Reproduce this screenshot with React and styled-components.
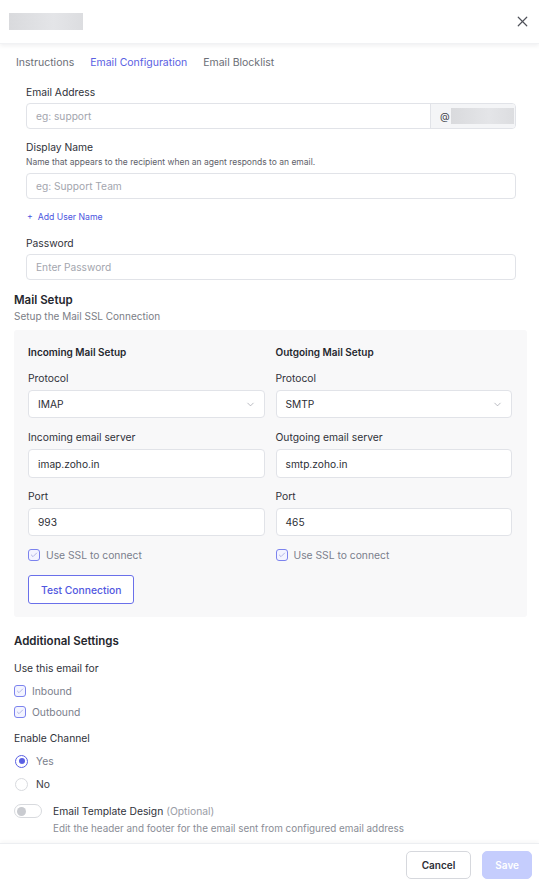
import React from 'react';
import styled, { createGlobalStyle } from 'styled-components';
import { X, ChevronDown, Check } from 'lucide-react';

const GlobalStyle = createGlobalStyle`
  * { box-sizing: border-box; }
  body {
    margin: 0;
    font-family: Inter, "Noto Sans", sans-serif;
    color: #2c2e35;
    background: #fff;
  }
`;

const Page = styled.div`
  width: 539px;
  height: 882px;
  display: flex;
  flex-direction: column;
  background: #fff;
`;

const Header = styled.header`
  height: 44px;
  flex: none;
  display: flex;
  align-items: center;
  justify-content: space-between;
  padding: 0 8px 0 9px;
  box-shadow: 0 2px 4px rgba(20, 24, 40, 0.06);
  border-bottom: 1px solid #f1f2f4;
`;

const Redacted = styled.span`
  display: inline-block;
  width: ${p => p.w || 74}px;
  height: ${p => p.h || 17}px;
  background: linear-gradient(90deg, #d9dadd, #e4e5e8 60%, #dcdde0);
`;

const Close = styled.button`
  border: 0;
  background: none;
  padding: 0;
  display: flex;
  color: #4f525a;
`;

const Body = styled.main`
  flex: 1;
  overflow: hidden;
`;

const Tabs = styled.nav`
  display: flex;
  gap: 16px;
  height: 36px;
  align-items: center;
  padding-left: 16px;
`;

const Tab = styled.span`
  font-size: 10.5px;
  color: ${p => (p.active ? '#5a60e3' : '#6b6e76')};
`;

const Fields = styled.section`
  padding: 5px 23px 0 26px;
`;

const Label = styled.div`
  font-size: 10.3px;
  line-height: 14px;
  color: #30323a;
  margin-top: ${p => p.mt || 0}px;
`;

const Help = styled.div`
  font-size: 8.5px;
  line-height: 12px;
  color: #5e616a;
  margin-top: 2px;
`;

const InputBox = styled.div`
  display: flex;
  height: ${p => p.h || 26}px;
  margin-top: ${p => p.mt || 4}px;
  border: 1px solid #e1e3e8;
  border-radius: 4px;
  background: #fff;
  overflow: hidden;
`;

const Field = styled.div`
  flex: 1;
  display: flex;
  align-items: center;
  justify-content: space-between;
  padding: 0 8px 0 9px;
  font-size: 10.2px;
  color: ${p => (p.filled ? '#2c2e35' : '#a3a6ae')};
`;

const Addon = styled.div`
  width: 85px;
  display: flex;
  align-items: center;
  gap: 1px;
  padding-left: 9px;
  background: #f4f5f7;
  border-left: 1px solid #e1e3e8;
  font-size: 10px;
  color: #40434b;
`;

const AddLink = styled.div`
  font-size: 8.7px;
  line-height: 12px;
  color: #4a55e0;
  margin-top: 12px;
  padding-left: 1px;
`;

const Section = styled.section`
  padding: 0 12px 0 14px;
`;

const SectionTitle = styled.h3`
  margin: ${p => p.mt || 0}px 0 0;
  font-size: 11.5px;
  line-height: 16px;
  font-weight: 600;
  color: #25272e;
`;

const SectionSub = styled.div`
  font-size: 10px;
  line-height: 14px;
  color: #7b7e86;
  margin-top: 1px;
`;

const Panel = styled.div`
  margin-top: 7px;
  background: #f8f8f9;
  border-radius: 3px;
  padding: 15px 15px 13px 14px;
`;

const Columns = styled.div`
  display: grid;
  grid-template-columns: 1fr 1fr;
  column-gap: 11px;
`;

const ColTitle = styled.div`
  font-size: 10px;
  line-height: 14px;
  font-weight: 600;
  color: #25272e;
`;

const CheckRow = styled.label`
  display: flex;
  align-items: center;
  gap: 6px;
  height: 14px;
  margin-top: ${p => p.mt || 0}px;
  font-size: 10.3px;
  color: #7a7e8c;
`;

const Box = styled.span`
  width: 12px;
  height: 12px;
  border: 1px solid #7c83ee;
  border-radius: 3px;
  background: #f3f4ff;
  display: flex;
  align-items: center;
  justify-content: center;
  color: #9297d8;
`;

const OutlineButton = styled.button`
  margin-top: 13px;
  height: 29px;
  padding: 0 12px;
  border: 1px solid #6a70ea;
  border-radius: 3px;
  background: #fff;
  color: #5158e0;
  font-family: inherit;
  font-size: 10.3px;
  font-weight: 500;
`;

const RadioRow = styled.label`
  display: flex;
  align-items: center;
  gap: 8px;
  height: 14px;
  margin-top: 9px;
  padding-left: 1px;
  font-size: 10.3px;
  color: ${p => (p.checked ? '#7a7e8c' : '#3a3c44')};
`;

const Radio = styled.span`
  width: 13px;
  height: 13px;
  border-radius: 50%;
  border: 1px solid ${p => (p.checked ? '#5a60e3' : '#d8dade')};
  display: flex;
  align-items: center;
  justify-content: center;
  &::after {
    content: '';
    width: 6px;
    height: 6px;
    border-radius: 50%;
    background: ${p => (p.checked ? '#5a60e3' : 'transparent')};
  }
`;

const ToggleRow = styled.div`
  display: flex;
  gap: 11px;
  margin-top: 13px;
`;

const Switch = styled.span`
  flex: none;
  width: 28px;
  height: 14px;
  border: 1px solid #d8dade;
  border-radius: 7px;
  background: #fff;
  display: flex;
  align-items: center;
  padding-left: 2px;
  &::before {
    content: '';
    width: 9px;
    height: 9px;
    border-radius: 50%;
    background: #c9cbd0;
  }
`;

const ToggleTitle = styled.div`
  font-size: 10.3px;
  line-height: 14px;
  color: #30323a;
  span { color: #9a9da6; }
`;

const ToggleSub = styled.div`
  font-size: 9.9px;
  line-height: 14px;
  color: #8a8d96;
  margin-top: 3px;
`;

const Footer = styled.footer`
  flex: none;
  height: 39px;
  border-top: 1px solid #eceef1;
  box-shadow: 0 -2px 4px rgba(20, 24, 40, 0.03);
  display: flex;
  justify-content: flex-end;
  align-items: flex-start;
  gap: 11px;
  padding: 7px 7px 0 0;
`;

const FootButton = styled.button`
  height: 28px;
  padding: 0 ${p => (p.primary ? 12 : 15)}px;
  border-radius: 5px;
  border: 1px solid ${p => (p.primary ? '#c5cdfd' : '#d6d8dd')};
  background: ${p => (p.primary ? '#c5cdfd' : '#fff')};
  color: ${p => (p.primary ? '#fff' : '#2c2e35')};
  font-family: inherit;
  font-size: 10px;
  font-weight: 600;
`;

const Checkbox = ({ children, mt }) => (
  <CheckRow mt={mt}>
    <Box>
      <Check size={8} strokeWidth={2} />
    </Box>
    {children}
  </CheckRow>
);

const Select = ({ value }) => (
  <InputBox h={28} mt={5}>
    <Field filled>
      {value}
      <ChevronDown size={11} color="#9a9da6" strokeWidth={1.5} />
    </Field>
  </InputBox>
);

const ServerColumn = ({ title, protocol, serverLabel, server, port }) => (
  <div>
    <ColTitle>{title}</ColTitle>
    <Label mt={12}>Protocol</Label>
    <Select value={protocol} />
    <Label mt={12}>{serverLabel}</Label>
    <InputBox h={29} mt={5}>
      <Field filled>{server}</Field>
    </InputBox>
    <Label mt={11}>Port</Label>
    <InputBox h={28} mt={5}>
      <Field filled>{port}</Field>
    </InputBox>
    <Checkbox mt={12}>Use SSL to connect</Checkbox>
  </div>
);

export default function App() {
  return (
    <Page>
      <GlobalStyle />
      <Header>
        <Redacted />
        <Close aria-label="Close">
          <X size={17} strokeWidth={1.7} />
        </Close>
      </Header>
      <Body>
        <Tabs>
          <Tab>Instructions</Tab>
          <Tab active>Email Configuration</Tab>
          <Tab>Email Blocklist</Tab>
        </Tabs>

        <Fields>
          <Label>Email Address</Label>
          <InputBox>
            <Field>eg: support</Field>
            <Addon>
              @<Redacted w={63} h={16} />
            </Addon>
          </InputBox>

          <Label mt={11}>Display Name</Label>
          <Help>Name that appears to the recipient when an agent responds to an email.</Help>
          <InputBox mt={5}>
            <Field>eg: Support Team</Field>
          </InputBox>

          <AddLink>+&nbsp; Add User Name</AddLink>

          <Label mt={13}>Password</Label>
          <InputBox>
            <Field>Enter Password</Field>
          </InputBox>
        </Fields>

        <Section>
          <SectionTitle mt={12}>Mail Setup</SectionTitle>
          <SectionSub>Setup the Mail SSL Connection</SectionSub>
          <Panel>
            <Columns>
              <ServerColumn
                title="Incoming Mail Setup"
                protocol="IMAP"
                serverLabel="Incoming email server"
                server="imap.zoho.in"
                port="993"
              />
              <ServerColumn
                title="Outgoing Mail Setup"
                protocol="SMTP"
                serverLabel="Outgoing email server"
                server="smtp.zoho.in"
                port="465"
              />
            </Columns>
            <OutlineButton>Test Connection</OutlineButton>
          </Panel>

          <SectionTitle mt={16}>Additional Settings</SectionTitle>
          <Label mt={12}>Use this email for</Label>
          <Checkbox mt={9}>Inbound</Checkbox>
          <Checkbox mt={7}>Outbound</Checkbox>

          <Label mt={12}>Enable Channel</Label>
          <RadioRow checked>
            <Radio checked />
            Yes
          </RadioRow>
          <RadioRow>
            <Radio />
            No
          </RadioRow>

          <ToggleRow>
            <Switch />
            <div>
              <ToggleTitle>
                Email Template Design <span>(Optional)</span>
              </ToggleTitle>
              <ToggleSub>Edit the header and footer for the email sent from configured email address</ToggleSub>
            </div>
          </ToggleRow>
        </Section>
      </Body>
      <Footer>
        <FootButton>Cancel</FootButton>
        <FootButton primary>Save</FootButton>
      </Footer>
    </Page>
  );
}
